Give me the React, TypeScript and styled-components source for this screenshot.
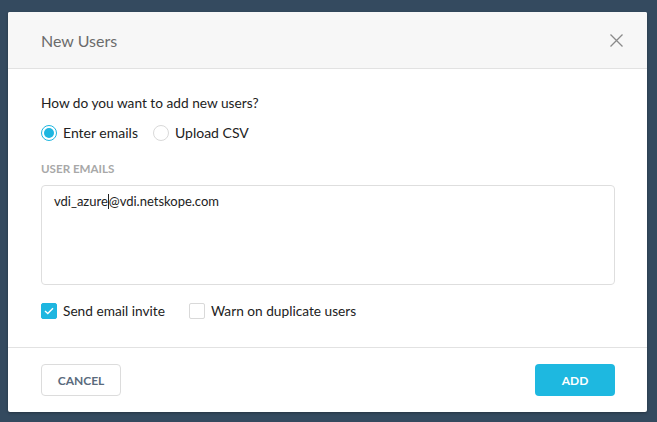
import React, { useState } from 'react';
import styled, { createGlobalStyle } from 'styled-components';

const GlobalStyle = createGlobalStyle`
  html, body {
    margin: 0;
    padding: 0;
    height: 100%;
    background: #344a5f;
    font-family: Lato, "Liberation Sans", sans-serif;
  }
  * { box-sizing: border-box; }
`;

export default function App() {
  const [mode, setMode] = useState<'emails' | 'csv'>('emails');
  const [sendInvite, setSendInvite] = useState(true);
  const [warnDup, setWarnDup] = useState(false);

  return (
    <>
      <GlobalStyle />
      <Page>
        <Dialog>
          <Header>
            <Title>New Users</Title>
            <CloseButton aria-label="Close">
              <svg width="13" height="13" viewBox="0 0 13 13">
                <path d="M0.5 0.5L12.5 12.5M12.5 0.5L0.5 12.5" stroke="#8a8a8a" strokeWidth="1.3" />
              </svg>
            </CloseButton>
          </Header>
          <Body>
            <Question>How do you want to add new users?</Question>
            <OptionRow>
              <Option onClick={() => setMode('emails')}>
                <Radio checked={mode === 'emails'} />
                Enter emails
              </Option>
              <Option onClick={() => setMode('csv')}>
                <Radio checked={mode === 'csv'} />
                Upload CSV
              </Option>
            </OptionRow>
            <FieldLabel>USER EMAILS</FieldLabel>
            <EmailBox>
              vdi_azure<Caret />@vdi.netskope.com
            </EmailBox>
            <OptionRow>
              <Check onClick={() => setSendInvite(!sendInvite)}>
                <Box checked={sendInvite}>
                  {sendInvite && (
                    <svg width="10" height="8" viewBox="0 0 10 8">
                      <path d="M1 4L3.8 6.6L9 1.2" stroke="#fff" strokeWidth="1.4" fill="none" />
                    </svg>
                  )}
                </Box>
                Send email invite
              </Check>
              <Check onClick={() => setWarnDup(!warnDup)}>
                <Box checked={warnDup} />
                Warn on duplicate users
              </Check>
            </OptionRow>
          </Body>
          <Footer>
            <CancelButton>CANCEL</CancelButton>
            <AddButton>ADD</AddButton>
          </Footer>
        </Dialog>
      </Page>
    </>
  );
}

const Page = styled.div`
  padding: 12px 10px 11px 8px;
`;

const Dialog = styled.section`
  width: 639px;
  background: #fff;
  border-radius: 2px;
  overflow: hidden;
  box-shadow: 0 1px 3px rgba(0, 0, 0, 0.3);
`;

const Header = styled.header`
  display: flex;
  align-items: center;
  justify-content: space-between;
  height: 57px;
  padding: 0 24px 0 33px;
  background: #f7f7f7;
  border-bottom: 1px solid #e2e2e2;
`;

const Title = styled.h2`
  margin: 0;
  font-size: 16px;
  font-weight: 400;
  color: #6b6b6b;
`;

const CloseButton = styled.button`
  display: flex;
  padding: 0;
  border: 0;
  background: none;
  cursor: pointer;
`;

const Body = styled.div`
  padding: 25px 32px 26px 33px;
`;

const Question = styled.p`
  margin: 0 0 11px;
  font-size: 13.7px;
  color: #222;
  line-height: 18px;
`;

const OptionRow = styled.div`
  display: flex;
  align-items: center;
  gap: 15px;
`;

const Option = styled.label`
  display: flex;
  align-items: center;
  gap: 5px;
  font-size: 14px;
  color: #222;
  line-height: 20px;
  cursor: pointer;
`;

const Radio = styled.span<{ checked: boolean }>`
  width: 16px;
  height: 16px;
  border-radius: 50%;
  border: 1px solid ${({ checked }) => (checked ? '#1eb6e0' : '#d9d9d9')};
  background: #fff;
  display: flex;
  align-items: center;
  justify-content: center;
  margin-right: 1px;

  &::after {
    content: '';
    width: 10px;
    height: 10px;
    border-radius: 50%;
    background: ${({ checked }) => (checked ? '#1eb6e0' : 'transparent')};
  }
`;

const FieldLabel = styled.div`
  margin: 19px 0 10px;
  font-size: 11.6px;
  font-weight: 700;
  color: #a8a8a8;
`;

const EmailBox = styled.div`
  height: 100px;
  padding: 6px 12px;
  border: 1px solid #dedede;
  border-radius: 4px;
  font-size: 13px;
  color: #222;
  line-height: 18px;
  margin-bottom: 16px;
`;

const Caret = styled.span`
  display: inline-block;
  width: 1px;
  height: 15px;
  background: #222;
  vertical-align: -3px;
`;

const Check = styled.label`
  display: flex;
  align-items: center;
  gap: 6px;
  font-size: 13.7px;
  color: #222;
  line-height: 20px;
  cursor: pointer;
  margin-right: 9px;
`;

const Box = styled.span<{ checked: boolean }>`
  width: 16px;
  height: 16px;
  border-radius: 2px;
  border: 1px solid ${({ checked }) => (checked ? '#1eb6e0' : '#d9d9d9')};
  background: ${({ checked }) => (checked ? '#1eb6e0' : '#fff')};
  display: flex;
  align-items: center;
  justify-content: center;
`;

const Footer = styled.footer`
  display: flex;
  justify-content: space-between;
  align-items: center;
  padding: 16px 32px 16px 33px;
  border-top: 1px solid #e2e2e2;
`;

const CancelButton = styled.button`
  width: 80px;
  height: 32px;
  border: 1px solid #dcdcdc;
  border-radius: 4px;
  background: #fff;
  font-family: inherit;
  font-size: 12px;
  font-weight: 700;
  color: #5a6b7d;
  cursor: pointer;
`;

const AddButton = styled.button`
  width: 80px;
  height: 32px;
  border: 0;
  border-radius: 4px;
  background: #1eb8e0;
  font-family: inherit;
  font-size: 12px;
  font-weight: 700;
  color: #fff;
  cursor: pointer;
`;
